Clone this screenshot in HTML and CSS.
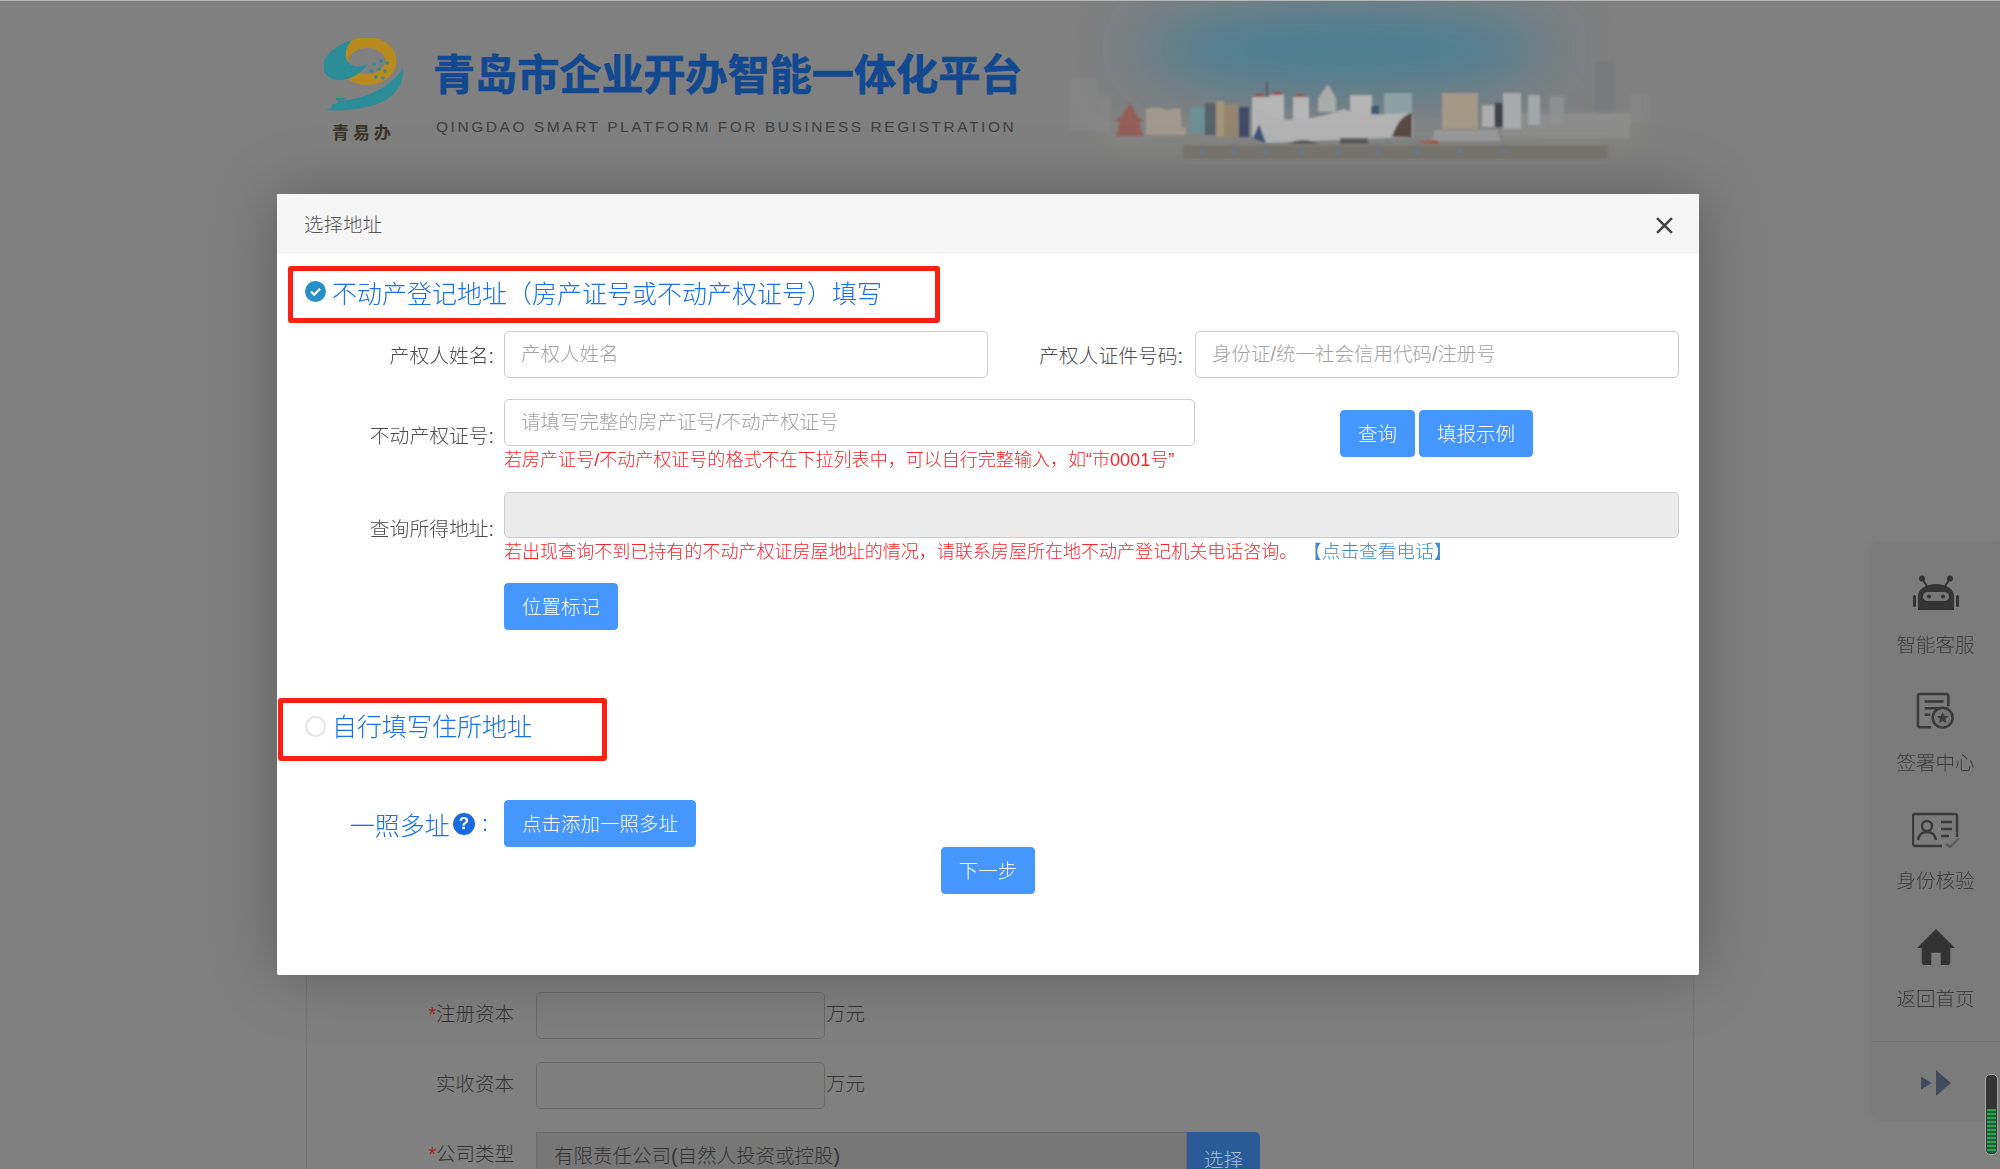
FILE: index.html
```html
<!DOCTYPE html>
<html lang="zh-CN">
<head>
    <meta charset="UTF-8">
    <title>青岛市企业开办智能一体化平台</title>
    <link rel="stylesheet" href="styles.css">
</head>
<body>
    <div class="page">
        <div class="site-header">
            <div class="brand-mark">
                <svg class="brand-logo" viewBox="0 0 80 74" width="80" height="74">
                    <ellipse cx="43" cy="23" rx="24" ry="18.5" fill="none" stroke="#b98a1e" stroke-width="11"/>
                    <path d="M28 2C10 8-3 20-1 30c2 11 15 15 27 10 8-3 14-8 18-14-9 4-16 3-20-2-4-6-3-14 4-22z" fill="#2c8d98"/>
                    <path d="M79 30c2 19-13 35-36 39-14 3-28 4-41 3 6-2 10-5 12-9 21-1 50-10 65-33z" fill="#2c8d98"/>
                    <g fill="#2c8d98">
                        <circle cx="50" cy="26" r="1.8"/><circle cx="57" cy="23" r="1.8"/><circle cx="63" cy="25" r="1.8"/>
                        <circle cx="47" cy="33" r="1.8"/><circle cx="55" cy="31" r="1.8"/><circle cx="61" cy="33" r="1.8"/>
                        <circle cx="52" cy="39" r="1.8"/><circle cx="59" cy="40" r="1.8"/>
                        <rect x="12" y="60" width="9" height="2.4"/><rect x="8" y="66" width="6" height="2.4"/>
                    </g>
                </svg>
                <div class="brand-short">青易办</div>
            </div>
            <div class="brand-text">
                <div class="brand-title">青岛市企业开办智能一体化平台</div>
                <div class="brand-sub">QINGDAO SMART PLATFORM FOR BUSINESS REGISTRATION</div>
            </div>
            <svg class="skyline" viewBox="0 0 700 190" width="700" height="190">
                <defs>
                    <filter id="sky-blur" x="-50%" y="-120%" width="200%" height="340%"><feGaussianBlur stdDeviation="30"/></filter>
                    <filter id="haze" x="-30%" y="-30%" width="160%" height="160%"><feGaussianBlur stdDeviation="12"/></filter>
                    <filter id="soft"><feGaussianBlur stdDeviation="0.8"/></filter>
                    <filter id="fade"><feGaussianBlur stdDeviation="1.8"/></filter>
                </defs>
                <ellipse cx="305" cy="48" rx="205" ry="40" fill="#477e94" filter="url(#sky-blur)"/>
                <rect x="60" y="118" width="540" height="34" fill="#8b8b88" opacity="0.5" filter="url(#haze)"/>
                <g filter="url(#fade)" opacity="0.45">
                    <rect x="30" y="78" width="28" height="52" fill="#8a8a8a"/>
                    <rect x="58" y="95" width="12" height="36" fill="#8d8d8d"/>
                    <rect x="555" y="60" width="20" height="52" fill="#6f7478"/>
                    <rect x="590" y="92" width="18" height="30" fill="#8a8a8a"/>
                    <rect x="462" y="112" width="128" height="26" fill="#999"/>
                    <rect x="510" y="95" width="14" height="28" fill="#a2a2a2"/>
                </g>
                <g filter="url(#soft)">
                    <path d="M90 102l8 14 6 3-5 2 4 14H76l4-14-5-2 6-3z" fill="#945e58"/>
                    <path d="M106 108l12-2 8 3 14-2 2 20h4v7h-40z" fill="#a29a8e"/>
                    <rect x="150" y="106" width="16" height="26" fill="#6d8e94"/>
                    <rect x="165" y="102" width="12" height="32" fill="#59626a"/>
                    <rect x="176" y="100" width="8" height="36" fill="#a5947c"/>
                    <rect x="184" y="103" width="14" height="33" fill="#94856f"/>
                    <rect x="199" y="106" width="10" height="30" fill="#3f4b68"/>
                    <rect x="212" y="96" width="20" height="40" fill="#b6b6b6"/>
                    <rect x="230" y="93" width="14" height="40" fill="#b6b6b6"/>
                    <rect x="253" y="96" width="16" height="30" fill="#b6b6b6"/>
                    <path d="M213 96q6-6 12 0zM231 94q6-6 12 0zM254 96q6-6 12 0z" fill="#a9423c"/>
                    <rect x="226" y="80" width="2" height="16" fill="#5a5a66"/>
                    <path d="M288 83l8 14v14h-18V97z" fill="#a9aca8"/>
                    <rect x="310" y="94" width="22" height="24" fill="#b5b5b5"/>
                    <rect x="331" y="105" width="8" height="14" fill="#3e5a72"/>
                    <rect x="344" y="92" width="28" height="28" fill="#8da1a4"/>
                    <rect x="402" y="92" width="36" height="36" fill="#a39a88"/>
                    <rect x="442" y="104" width="12" height="22" fill="#adadad"/>
                    <rect x="455" y="102" width="8" height="24" fill="#3f4248"/>
                    <rect x="463" y="92" width="18" height="36" fill="#a8aaac"/>
                    <rect x="488" y="94" width="12" height="30" fill="#a3a7aa"/>
                    <path d="M226 142c-8-14-12-28-8-34 20 18 60 10 86 0 20 8 42 5 64 4 4 0 5 3 5 6v18z" fill="#b3b3b3"/>
                    <path d="M226 142l-7-19-6 14z" fill="#3e5274"/>
                    <path d="M352 136c4-12 10-22 20-24v24z" fill="#5a4a44"/>
                    <path d="M248 143q14-8 32 0zM300 143h28v-6h-28z" fill="#5b5b5b"/>
                    <path d="M395 129h62l4 11h-70z" fill="#989898"/>
                    <path d="M375 141l22-2 2 5z" fill="#a55b4a"/>
                </g>
                <rect x="143" y="144" width="425" height="14" fill="#777670" filter="url(#fade)"/>
                <g fill="#6c7b92" opacity="0.8">
                    <circle cx="161" cy="150" r="3"/><circle cx="193" cy="150" r="3"/><circle cx="226" cy="151" r="3"/>
                    <circle cx="262" cy="151" r="3"/><circle cx="298" cy="151" r="3"/><circle cx="337" cy="150" r="3"/>
                    <circle cx="377" cy="150" r="3"/><circle cx="420" cy="150" r="3"/><circle cx="463" cy="149" r="3"/>
                </g>
            </svg>
        </div>

        <div class="company-form">
            <div class="company-row">
                <span class="company-label"><i>*</i>注册资本</span>
                <input class="company-input" type="text">
                <span class="company-unit">万元</span>
            </div>
            <div class="company-row">
                <span class="company-label">实收资本</span>
                <input class="company-input" type="text">
                <span class="company-unit">万元</span>
            </div>
            <div class="company-row">
                <span class="company-label"><i>*</i>公司类型</span>
                <div class="company-select">有限责任公司(自然人投资或控股)</div>
                <div class="company-pick">选择</div>
            </div>
        </div>
    </div>

    <div class="side-tools">
        <div class="side-item">
            <svg class="side-icon" viewBox="0 0 48 36" width="48" height="36">
                <circle cx="10" cy="3.5" r="3" fill="#333"/><circle cx="38" cy="3.5" r="3" fill="#333"/>
                <path d="M10 4l5 7M38 4l-5 7" stroke="#333" stroke-width="2"/>
                <path d="M6 35V21C6 14 14 9 24 9s18 5 18 12v14z" fill="#333"/>
                <rect x="1" y="20" width="3" height="12" rx="1.5" fill="#333"/><rect x="44" y="20" width="3" height="12" rx="1.5" fill="#333"/>
                <rect x="11" y="17" width="26" height="9" rx="4.5" fill="#767676"/>
                <circle cx="17" cy="21.5" r="2" fill="#333"/><circle cx="31" cy="21.5" r="2" fill="#333"/>
            </svg>
            <span>智能客服</span>
        </div>
        <div class="side-item">
            <svg class="side-icon" viewBox="0 0 48 40" width="48" height="40">
                <path d="M19 37H7a2 2 0 0 1-2-2V4a2 2 0 0 1 2-2h28a2 2 0 0 1 2 2v11" fill="none" stroke="#3a3a3a" stroke-width="2.6"/>
                <path d="M12 10h20M12 17h14M12 24h6" stroke="#3a3a3a" stroke-width="2.6" fill="none"/>
                <circle cx="31" cy="27" r="10.5" fill="#767676" stroke="#3a3a3a" stroke-width="2.6"/>
                <path d="M31 21l1.8 3.9 4.2.5-3.1 2.9.8 4.2-3.7-2.1-3.7 2.1.8-4.2-3.1-2.9 4.2-.5z" fill="#3a3a3a"/>
            </svg>
            <span>签署中心</span>
        </div>
        <div class="side-item">
            <svg class="side-icon side-icon-card" viewBox="0 0 48 36" width="48" height="36">
                <path d="M30 33H3a2 2 0 0 1-2-2V3a2 2 0 0 1 2-2h40a2 2 0 0 1 2 2v21" fill="none" stroke="#3a3a3a" stroke-width="2.4"/>
                <circle cx="15" cy="13" r="5" fill="none" stroke="#3a3a3a" stroke-width="2.4"/>
                <path d="M6 27c1-6 5-8 9-8s8 2 9 8" fill="none" stroke="#3a3a3a" stroke-width="2.4"/>
                <path d="M29 9h11M29 16h11M29 23h8" stroke="#3a3a3a" stroke-width="2.4"/>
                <path d="M34 31l4 3 9-9" fill="none" stroke="#5a5a5a" stroke-width="2.2"/>
            </svg>
            <span>身份核验</span>
        </div>
        <div class="side-item">
            <svg class="side-icon" viewBox="0 0 42 40" width="42" height="40">
                <path d="M21 1L1 21h5v15a3 3 0 0 0 3 3h7V26h10v13h7a3 3 0 0 0 3-3V21h5z" fill="#333"/>
            </svg>
            <span>返回首页</span>
        </div>
        <div class="side-toggle">
            <svg viewBox="0 0 30 24" width="32" height="26">
                <path d="M1 6l10 6-10 6zM15 0l14 12-14 12z" fill="#3f4a5c"/>
            </svg>
        </div>
    </div>
    <div class="volume-meter"><div class="volume-level"></div></div>

    <div class="backdrop-shade"></div>

    <div class="modal">
        <div class="modal-head">
            <span>选择地址</span>
            <svg class="modal-close" viewBox="0 0 18 18" width="19" height="19">
                <path d="M2 2l14 14M16 2L2 16" stroke="#444" stroke-width="2.4"/>
            </svg>
        </div>
        <div class="modal-body">
            <div class="addr-option addr-option-first">
                <span class="radio radio-on">
                    <svg viewBox="0 0 21 21" width="21" height="21"><path d="M6 10.5l3.2 3.2 5.8-6" fill="none" stroke="#fff" stroke-width="2.2"/></svg>
                </span>
                <span class="addr-title">不动产登记地址（房产证号或不动产权证号）填写</span>
            </div>

            <div class="form-row">
                <label class="form-label">产权人姓名:</label>
                <input class="form-input input-name" type="text" placeholder="产权人姓名">
                <label class="form-label label-idno">产权人证件号码:</label>
                <input class="form-input input-idno" type="text" placeholder="身份证/统一社会信用代码/注册号">
            </div>

            <div class="form-row form-row-note">
                <label class="form-label">不动产权证号:</label>
                <div class="field-col field-cert">
                    <input class="form-input" type="text" placeholder="请填写完整的房产证号/不动产权证号">
                    <div class="field-note">若房产证号/不动产权证号的格式不在下拉列表中，可以自行完整输入，如“市0001号”</div>
                </div>
                <div class="query-btns">
                    <button class="btn">查询</button>
                    <button class="btn">填报示例</button>
                </div>
            </div>

            <div class="form-row form-row-note">
                <label class="form-label">查询所得地址:</label>
                <div class="field-col field-full">
                    <input class="form-input input-off" type="text" disabled>
                    <div class="field-note">若出现查询不到已持有的不动产权证房屋地址的情况，请联系房屋所在地不动产登记机关电话咨询。<a class="note-link">【点击查看电话】</a></div>
                </div>
            </div>

            <div class="mark-row"><button class="btn">位置标记</button></div>

            <div class="addr-option addr-option-second">
                <span class="radio"></span>
                <span class="addr-title">自行填写住所地址</span>
            </div>

            <div class="multi-row">
                <div class="multi-label">一照多址<span class="help-dot">?</span><span class="multi-colon">:</span></div>
                <button class="btn">点击添加一照多址</button>
            </div>

            <div class="next-row"><button class="btn">下一步</button></div>
        </div>
    </div>
</body>
</html>
```

FILE: styles.css
```css
* {
    box-sizing: border-box;
}

html, body {
    margin: 0;
    height: 100%;
    overflow: hidden;
}

body {
    background-color: #808080;
    font-family: "Liberation Sans", "Noto Sans CJK SC", sans-serif;
    font-size: 19.5px;
    color: #555;
}

.page {
    height: 1169px;
    border-top: 1px solid #b8b8b8;
}

/* site header behind the dialog */
.site-header {
    display: flex;
    align-items: flex-start;
    height: 193px;
    padding-left: 324px;
}

.brand-mark {
    width: 80px;
    margin-top: 37px;
}

.brand-logo {
    display: block;
}

.brand-short {
    margin: 12px 0 0 8px;
    width: 64px;
    font-size: 17px;
    line-height: 20px;
    font-weight: 700;
    letter-spacing: 4px;
    color: #3a3428;
    white-space: nowrap;
}

.brand-text {
    margin: 50px 0 0 29px;
    width: 607px;
}

.brand-title {
    font-size: 42.1px;
    line-height: 50px;
    font-weight: 700;
    color: #11488f;
    -webkit-text-stroke: 0.7px #11488f;
    white-space: nowrap;
}

.brand-sub {
    margin: 16px 0 0 3px;
    font-size: 15.5px;
    line-height: 20px;
    letter-spacing: 2.55px;
    color: #3f3f3f;
    white-space: nowrap;
}

.skyline {
    display: block;
}

/* company form below the dialog */
.company-form {
    width: 1388px;
    height: 975px;
    margin: 0 auto;
    padding-top: 798px;
    border-left: 1px solid #747474;
    border-right: 1px solid #747474;
}

.company-row {
    display: flex;
    align-items: center;
    height: 47px;
    margin-bottom: 23px;
    color: #333;
    font-weight: 300;
}

.company-label {
    width: 207px;
    margin-top: -6px;
    text-align: right;
}

.company-label i {
    font-style: normal;
    color: #a02020;
}

.company-input {
    width: 289px;
    height: 47px;
    margin-left: 22px;
    background-color: #7e7e7e;
    border: 1px solid #6a6a6a;
    border-radius: 5px;
}

.company-unit {
    margin: -6px 0 0 1px;
}

.company-select {
    width: 651px;
    height: 47px;
    margin-left: 22px;
    padding: 7px 0 0 17px;
    background-color: #777;
    border: 1px solid #6a6a6a;
}

.company-pick {
    width: 73px;
    height: 47px;
    padding-top: 12px;
    text-align: center;
    background-color: #2a5b97;
    border-radius: 0 5px 5px 0;
    color: #a8bcd4;
}

/* floating tools */
.side-tools {
    position: fixed;
    top: 541px;
    right: 0;
    width: 129px;
    height: 580px;
    background-color: #7b7b7b;
    border-radius: 10px 0 0 10px;
    box-shadow: -2px 0 8px rgba(0, 0, 0, 0.04);
    color: #3c3c3c;
}

.side-item {
    display: flex;
    flex-direction: column;
    align-items: center;
    height: 118px;
    padding-top: 33px;
    font-weight: 300;
    line-height: 26px;
}

.side-icon {
    display: block;
    height: 38px;
    margin-bottom: 20px;
}

.side-icon-card {
    margin-top: 2px;
    margin-bottom: 18px;
}

.side-toggle {
    position: absolute;
    left: 0;
    right: 0;
    bottom: 0;
    height: 80px;
    padding-top: 3px;
    display: flex;
    align-items: center;
    justify-content: center;
    border-top: 1px solid #737373;
}

.volume-meter {
    position: fixed;
    top: 1074px;
    left: 1985px;
    width: 13px;
    height: 81px;
    padding-top: 34px;
    background-color: #333;
    border: 1px solid #a8a8a8;
    border-radius: 5px;
}

.volume-level {
    height: 44px;
    margin: 0 1px;
    background: repeating-linear-gradient(#27a84f 0, #27a84f 2px, #1c5c33 2px, #1c5c33 4px);
}

/* dialog */
.backdrop-shade {
    position: fixed;
    top: 194px;
    left: 277px;
    width: 1422px;
    height: 781px;
    box-shadow: 0 0 60px rgba(0, 0, 0, 0.28);
}

.modal {
    position: fixed;
    top: 194px;
    left: 277px;
    width: 1422px;
    height: 781px;
    background-color: #fff;
    border-radius: 2px;
}

.modal-head {
    display: flex;
    align-items: center;
    justify-content: space-between;
    height: 59px;
    padding: 0 25px 0 27px;
    background-color: #f6f6f6;
    border-bottom: 1px solid #ececec;
    color: #555;
    font-size: 19.5px;
    font-weight: 300;
}

.modal-close {
    margin-top: 4px;
}

.modal-body {
    padding-top: 13px;
}

.addr-option {
    display: flex;
    align-items: center;
    height: 57px;
    border: 5px solid #fb1f14;
    border-radius: 3px;
}

.addr-option-first {
    width: 652px;
    margin-left: 11px;
    padding-left: 12px;
}

.addr-option-second {
    width: 329px;
    height: 63px;
    margin: 68px 0 0 1px;
    padding-left: 22px;
}

.radio {
    width: 21px;
    height: 21px;
    border: 2px solid #e4e4e4;
    border-radius: 50%;
    margin-top: -6px;
}

.radio-on {
    border: 0;
    background-color: #268fc8;
}

.radio svg {
    display: block;
}

.addr-title {
    margin: -6px 0 0 6px;
    font-size: 25px;
    font-weight: 300;
    color: #1a70e6;
    white-space: nowrap;
}

.addr-option-second .addr-title {
    margin-top: -10px;
}

.form-row {
    display: flex;
    align-items: center;
    margin-top: 8px;
    padding-right: 20px;
}

.form-row-note {
    margin-top: 21px;
    align-items: center;
}

.form-label {
    flex: none;
    width: 217px;
    margin-top: -1px;
    text-align: right;
    font-size: 19.8px;
    font-weight: 300;
    color: #4c4c4c;
    white-space: nowrap;
}

.form-row .form-input,
.field-col .form-input {
    display: block;
    height: 47px;
    padding: 0 16px;
    background-color: #fff;
    border: 1px solid #ccc;
    border-radius: 5px;
    font: inherit;
    font-weight: 300;
}

.form-input::placeholder {
    color: #a2a2a2;
    opacity: 1;
}

.form-row .input-name {
    width: 484px;
    margin-left: 10px;
}

.label-idno {
    width: 195px;
}

.form-row .input-idno {
    width: 484px;
    margin-left: 12px;
}

.field-col {
    margin-left: 10px;
}

.field-cert {
    width: 691px;
}

.field-cert .form-input,
.field-full .form-input {
    width: 100%;
}

.field-full {
    width: 1175px;
}

.field-col .input-off {
    height: 46px;
    background-color: #ebebeb;
}

.field-note {
    margin-top: 3px;
    font-size: 18.05px;
    line-height: 22px;
    font-weight: 300;
    color: #f9232a;
    white-space: nowrap;
}

.note-link {
    margin-left: 15px;
    font-size: 18.7px;
    color: #3f8ac8;
}

.query-btns {
    display: flex;
    gap: 4px;
    margin: -3px 0 0 145px;
}

.btn {
    height: 47px;
    padding: 0 17px 2px;
    background-color: #4596fd;
    border: 1px solid #4596fd;
    border-radius: 4px;
    color: #fff;
    font: inherit;
    font-weight: 300;
    white-space: nowrap;
}

.mark-row {
    margin: 20px 0 0 227px;
}

.multi-row {
    display: flex;
    align-items: center;
    margin-top: 39px;
}

.multi-label {
    display: flex;
    align-items: center;
    justify-content: flex-end;
    width: 217px;
    padding-right: 6px;
    margin-right: 10px;
    font-size: 25px;
    font-weight: 300;
    color: #1a70e6;
    white-space: nowrap;
}

.help-dot {
    width: 22px;
    height: 22px;
    margin-left: 3px;
    background-color: #1a6be0;
    border-radius: 50%;
    color: #fff;
    font-size: 17px;
    line-height: 22px;
    font-weight: 700;
    text-align: center;
}

.multi-colon {
    margin-left: 7px;
    font-size: 22px;
}

.next-row {
    margin-top: 0;
    text-align: center;
}
```
